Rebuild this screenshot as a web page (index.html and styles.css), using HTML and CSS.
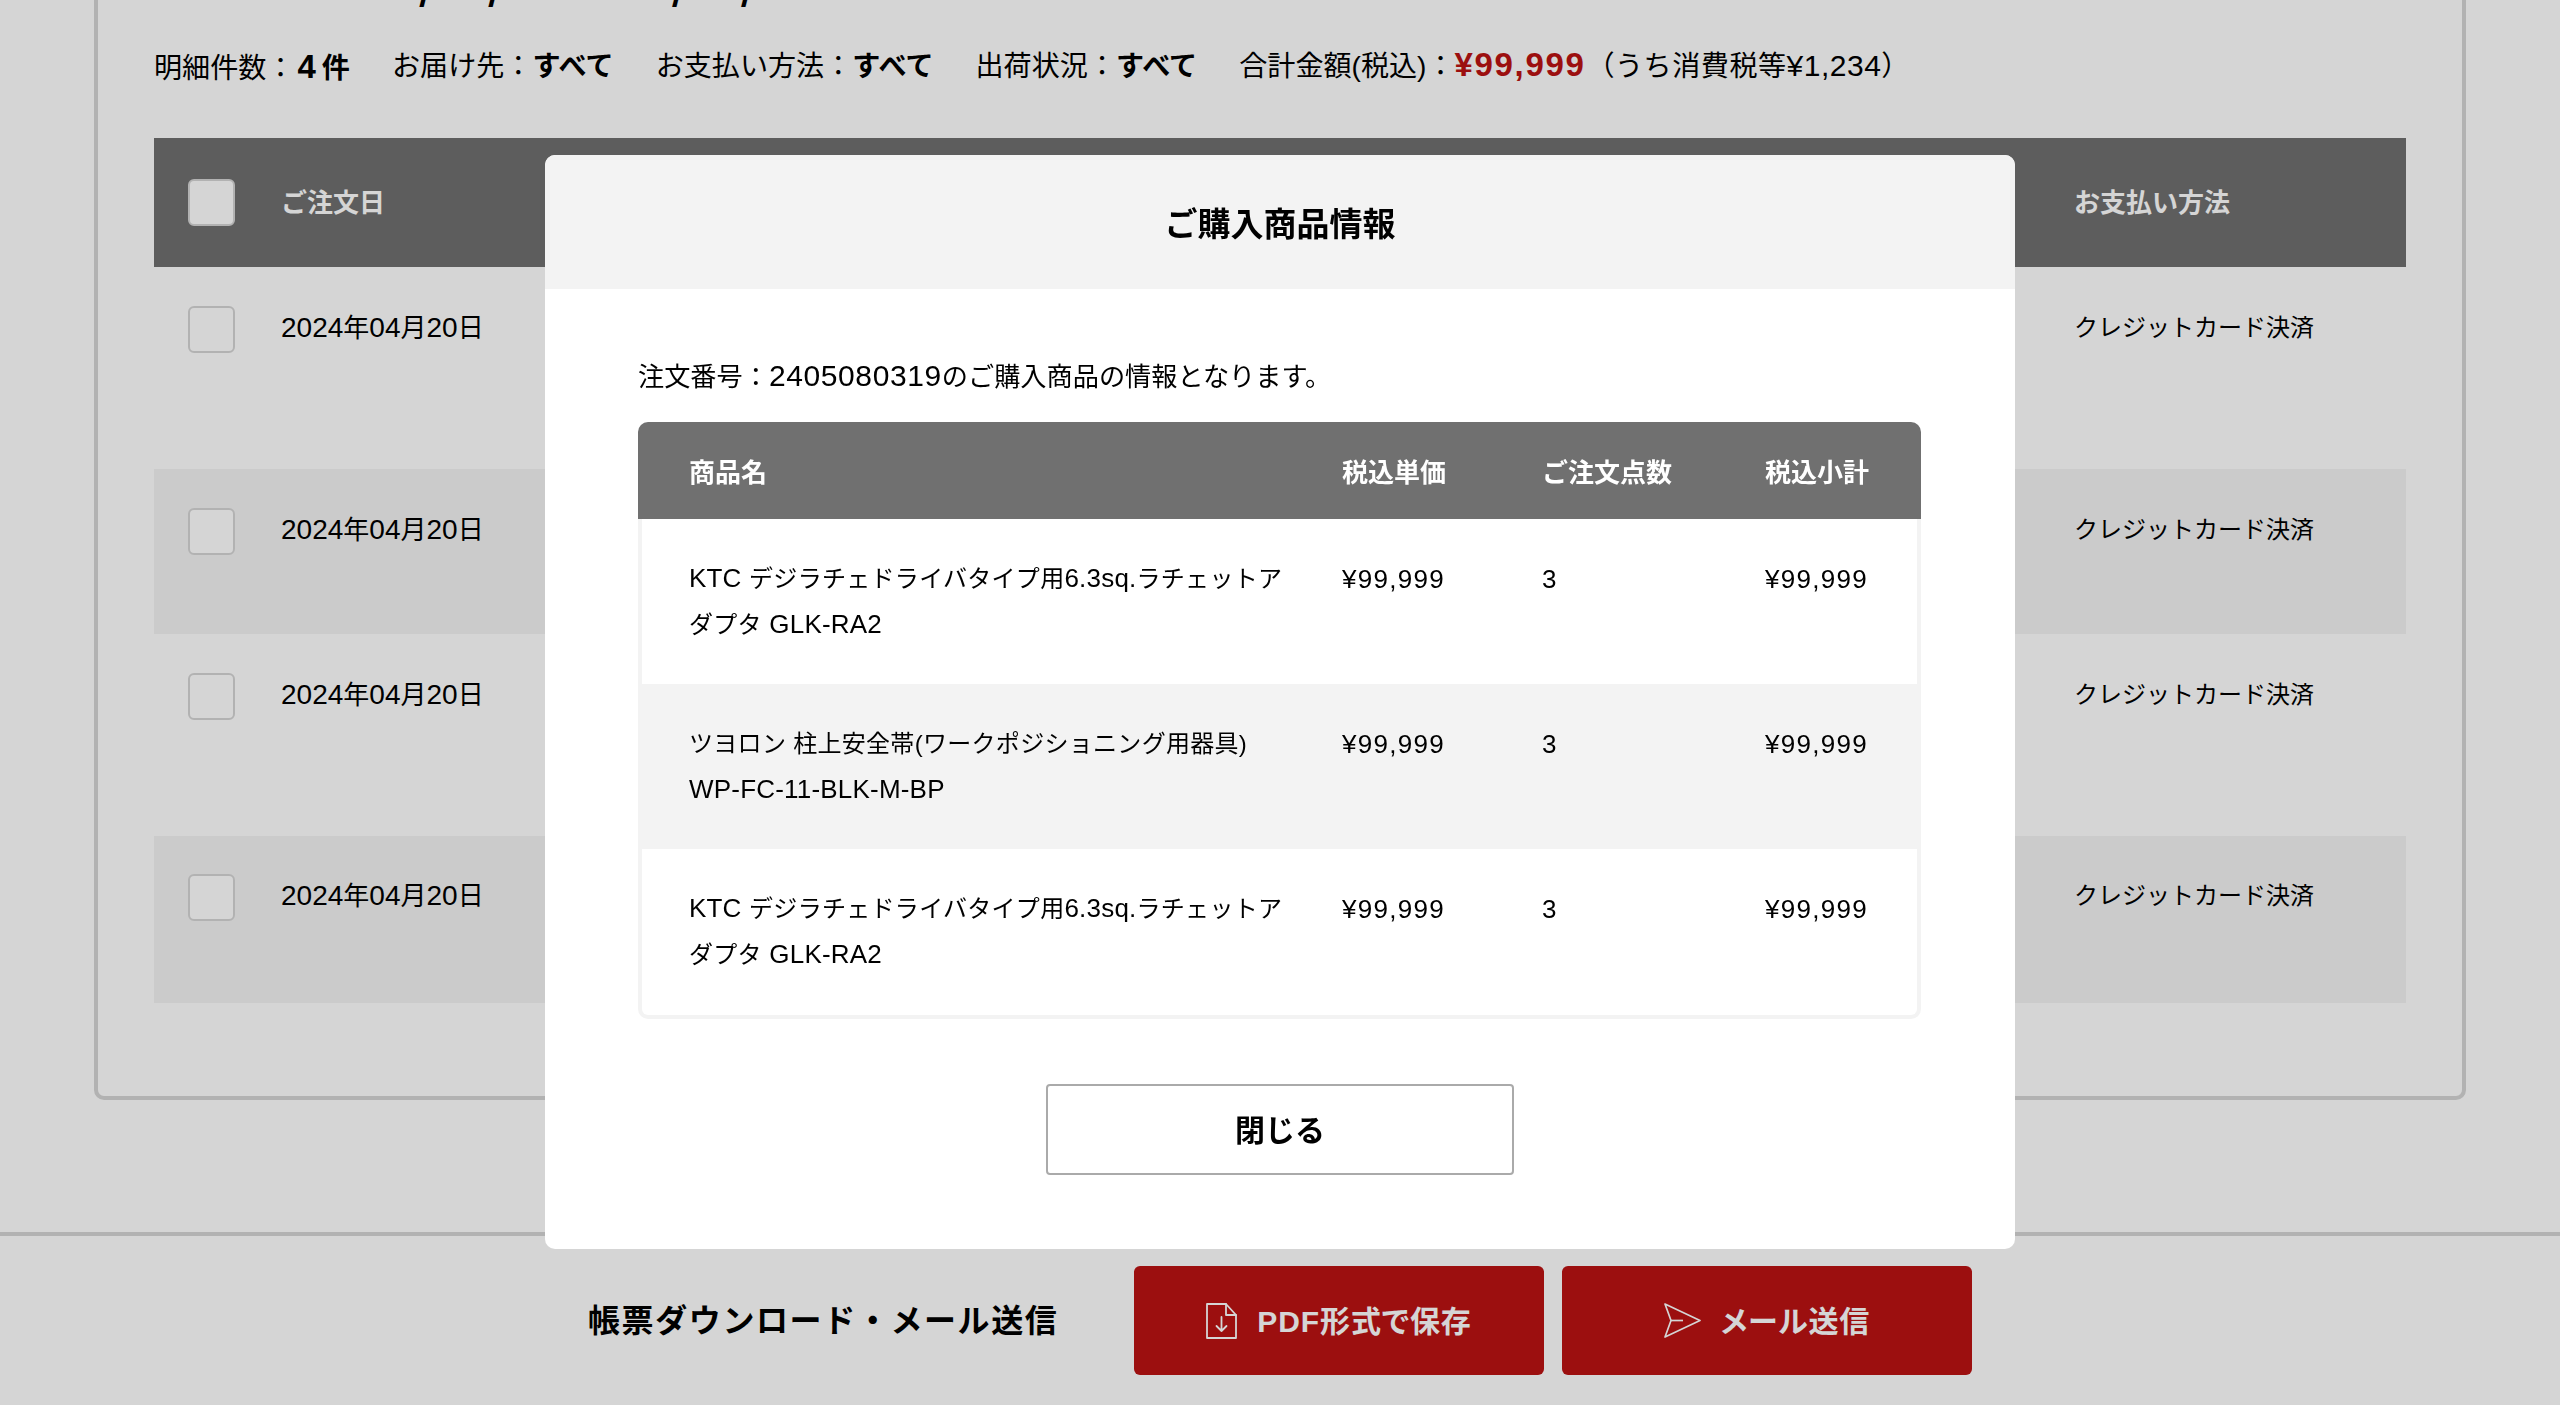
FILE: index.html
```html
<!DOCTYPE html>
<html lang="ja">
<head>
<meta charset="utf-8">
<title>ご購入商品情報</title>
<link rel="stylesheet" href="styles.css">
</head>
<body>
<div class="page">
  <main class="main">
    <section class="panel">
      <p class="period"><span>2024/04/20</span><span>2024/05/08</span></p>
      <p class="summary">
        <span class="item">明細件数：<b class="count"><span class="count-num">4</span>件</b></span>
        <span class="item">お届け先：<b>すべて</b></span>
        <span class="item">お支払い方法：<b>すべて</b></span>
        <span class="item">出荷状況：<b>すべて</b></span>
        <span class="item">合計金額(税込)：<b class="price">¥99,999</b><span class="tax">（うち消費税等<span class="tax-num">¥1,234</span>）</span></span>
      </p>
      <div class="orders">
        <div class="orders-head">
          <span class="check"></span><span class="date">ご注文日</span><span class="pay">お支払い方法</span>
        </div>
        <div class="order order-a">
          <span class="check"></span><span class="date"><span class="num">2024</span>年<span class="num">04</span>月<span class="num">20</span>日</span><span class="pay">クレジットカード決済</span>
        </div>
        <div class="order order-b striped">
          <span class="check"></span><span class="date"><span class="num">2024</span>年<span class="num">04</span>月<span class="num">20</span>日</span><span class="pay">クレジットカード決済</span>
        </div>
        <div class="order order-a">
          <span class="check"></span><span class="date"><span class="num">2024</span>年<span class="num">04</span>月<span class="num">20</span>日</span><span class="pay">クレジットカード決済</span>
        </div>
        <div class="order order-c striped">
          <span class="check"></span><span class="date"><span class="num">2024</span>年<span class="num">04</span>月<span class="num">20</span>日</span><span class="pay">クレジットカード決済</span>
        </div>
      </div>
    </section>
  </main>
  <footer class="bar">
    <strong class="bar-title">帳票ダウンロード・メール送信</strong>
    <button class="red-btn" type="button">
      <svg class="ico-file" viewBox="0 0 31 36" fill="none" stroke="currentColor" stroke-width="1.8" stroke-linejoin="round" stroke-linecap="round"><path d="M1 1H20L30 12V35H1Z"/><path d="M20 1V12H30"/><path d="M15.5 14V28M10.5 23L15.5 28L20.5 23"/></svg>
      <span class="btn-label">PDF形式で保存</span>
    </button>
    <button class="red-btn" type="button">
      <svg class="ico-send" viewBox="0 0 37 35" fill="none" stroke="currentColor" stroke-width="1.7" stroke-linejoin="round"><path d="M1 1L36 17.5L1 34L7 17.5Z"/><path d="M7 17.5H19"/></svg>
      <span class="btn-label">メール送信</span>
    </button>
  </footer>
</div>
<div class="overlay">
  <div class="modal">
    <h2 class="modal-title">ご購入商品情報</h2>
    <div class="modal-body">
      <p class="lead">注文番号：<span class="lead-num">2405080319</span>のご購入商品の情報となります。</p>
      <table class="items">
        <thead>
          <tr><th class="c-name">商品名</th><th class="c-price">税込単価</th><th class="c-qty">ご注文点数</th><th class="c-sub">税込小計</th></tr>
        </thead>
        <tbody>
          <tr><td class="name"><span class="lat">KTC </span>デジラチェドライバタイプ用<span class="lat">6.3sq.</span>ラチェットアダプタ<span class="lat"> GLK-RA2</span></td><td class="yen">¥99,999</td><td>3</td><td class="yen">¥99,999</td></tr>
          <tr><td class="name">ツヨロン 柱上安全帯(ワークポジショニング用器具)<span class="lat"> WP-FC-11-BLK-M-BP</span></td><td class="yen">¥99,999</td><td>3</td><td class="yen">¥99,999</td></tr>
          <tr><td class="name"><span class="lat">KTC </span>デジラチェドライバタイプ用<span class="lat">6.3sq.</span>ラチェットアダプタ<span class="lat"> GLK-RA2</span></td><td class="yen">¥99,999</td><td>3</td><td class="yen">¥99,999</td></tr>
        </tbody>
      </table>
      <button class="close" type="button">閉じる</button>
    </div>
  </div>
</div>
</body>
</html>
```

FILE: styles.css
```css
* { box-sizing: border-box; }
html, body { margin: 0; height: 100%; }
body {
  background: #fff;
  color: #000;
  font-family: "Liberation Sans", "Noto Sans CJK JP", sans-serif;
  font-size: 26px;
  overflow: hidden;
}
.page { height: 1405px; display: flex; flex-direction: column; overflow: hidden; }
.main { flex: 1; min-height: 0; padding: 0 94px; border-bottom: 4px solid #d6d6d6; }
.panel {
  height: 1146px;
  margin-top: -46px;
  padding: 0 56px;
  border: 4px solid #d6d6d6;
  border-radius: 10px;
}
.period {
  margin: 0;
  height: 44px;
  padding-left: 161px;
  font-family: "Noto Sans CJK JP", sans-serif;
  font-size: 44px;
  font-weight: 700;
  line-height: 44px;
  display: flex;
  gap: 11px;
  white-space: nowrap;
}
.summary {
  margin: 0;
  height: 136px;
  padding-top: 42px;
  font-size: 28.1px;
  line-height: 46px;
  display: flex;
  gap: 42px;
  white-space: nowrap;
}
.summary .item { display: block; }
.count { margin-left: 3px; }
.count-num { font-size: 33px; margin-right: 6px; }
.price { font-size: 33px; letter-spacing: .05em; color: #bb1313; line-height: 1; }
.tax { margin-left: 1px; letter-spacing: .5px; }
.tax-num { font-size: 30px; line-height: 1; }
.orders-head, .order { display: flex; align-items: flex-start; padding-left: 34px; }
.orders-head { height: 129px; align-items: center; background: #707070; color: #fff; font-weight: 700; }
.order { padding-top: 39px; }
.order-a { height: 202px; }
.order-b { height: 165px; }
.order-c { height: 167px; padding-top: 38px; }
.striped { background: #f3f3f3; }
.check { width: 47px; height: 47px; border: 2px solid #d6d6d6; border-radius: 6px; background: #fff; flex: none; }
.date { width: 1793px; margin-left: 46px; line-height: 46px; }
.num { font-size: 28px; line-height: 1; }
.order .date, .order .pay { margin-top: -1px; }
.pay { line-height: 46px; font-size: 24px; }
.orders-head .pay { font-size: 26px; }
.bar { height: 169px; flex: none; display: flex; align-items: flex-start; padding: 30px 0 0 588px; }
.bar-title { font-size: 32px; letter-spacing: .05em; line-height: 111px; width: 546px; flex: none; white-space: nowrap; }
.red-btn {
  font: inherit;
  font-size: 30px;
  font-weight: 700;
  font-feature-settings: "palt";
  letter-spacing: .03em;
  color: #fff;
  background: #bb1313;
  border: 0;
  border-radius: 6px;
  width: 410px;
  height: 109px;
  margin-right: 18px;
  display: flex;
  align-items: center;
  justify-content: center;
  gap: 20px;
  flex: none;
}
.btn-label { margin-bottom: 4px; }
.ico-file { width: 31px; height: 36px; }
.ico-send { width: 37px; height: 35px; }
.overlay {
  position: fixed;
  inset: 0;
  background: rgba(0, 0, 0, .165);
  display: flex;
  justify-content: center;
  padding-top: 155px;
}
.modal { width: 1470px; height: 1094px; background: #fff; border-radius: 10px; overflow: hidden; }
.modal-title {
  margin: 0;
  height: 134px;
  padding-top: 3px;
  background: #f3f3f3;
  font-size: 33px;
  line-height: 134px;
  font-weight: 700;
  text-align: center;
}
.modal-body { padding: 0 93px; }
.lead { margin: 0; padding-top: 65px; height: 133px; line-height: 46px; font-size: 26.2px; white-space: nowrap; }
.lead-num { font-size: 30px; letter-spacing: .6px; line-height: 1; }
.items {
  width: 1283px;
  border-collapse: separate;
  border-spacing: 0;
  table-layout: fixed;
}
.items th {
  background: #707070;
  color: #fff;
  font-weight: 700;
  height: 97px;
  padding: 0;
  text-align: left;
}
.items th:first-child { border-top-left-radius: 10px; padding-left: 51px; }
.items th:last-child { border-top-right-radius: 10px; }
.c-name { width: 704px; }
.c-price { width: 200px; }
.c-qty { width: 223px; }
.items td {
  vertical-align: top;
  padding: 37px 0 0;
  height: 165px;
  line-height: 46px;
}
.yen { letter-spacing: .05em; }
.items td.name { font-size: 24px; letter-spacing: .3px; }
.lat { font-size: 26px; letter-spacing: .2px; line-height: 1; }
.items td:first-child { padding: 37px 50px 0 47px; border-left: 4px solid #f3f3f3; }
.items td:last-child { border-right: 4px solid #f3f3f3; }
.items tbody tr:nth-child(2) td { background: #f3f3f3; }
.items tbody tr:last-child td { border-bottom: 4px solid #f3f3f3; height: 170px; }
.items tbody tr:last-child td:first-child { border-bottom-left-radius: 10px; }
.items tbody tr:last-child td:last-child { border-bottom-right-radius: 10px; }
.close {
  display: block;
  margin: 65px auto 0;
  padding: 0 0 4px;
  width: 468px;
  height: 91px;
  font: inherit;
  font-size: 30px;
  font-weight: 700;
  background: #fff;
  color: #000;
  border: 2px solid #aaa;
  border-radius: 4px;
}
```
